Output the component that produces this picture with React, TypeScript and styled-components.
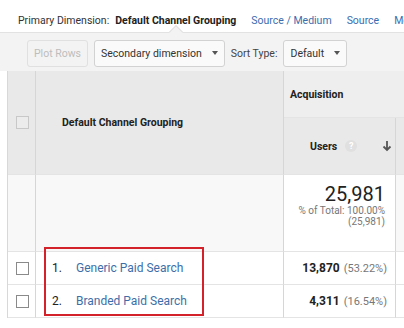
import React from 'react';
import styled, {createGlobalStyle} from 'styled-components';

const GlobalStyle = createGlobalStyle`
    body {
        margin: 0;
        background: #fff;
        font-family: Roboto, 'Liberation Sans', sans-serif;
        color: #222;
    }
`;

const Page = styled.div`
    width: 404px;
    height: 328px;
    overflow: hidden;
    position: relative;
`;

const DimensionBar = styled.div`
    display: flex;
    align-items: flex-end;
    height: 32px;
    padding: 0 0 5px 18px;
    box-sizing: border-box;
    font-size: 10.5px;
    white-space: nowrap;
    gap: 15px;
`;

const Label = styled.span`
    color: #333;
    margin-right: -9px;
`;

const Current = styled.span`
    font-weight: 700;
    color: #222;
`;

const DimLink = styled.a`
    color: #3a6cb0;
    text-decoration: none;
`;

const Toolbar = styled.div`
    position: relative;
    display: flex;
    align-items: center;
    gap: 6px;
    height: 39px;
    padding: 2px 0 0 27px;
    box-sizing: border-box;
    background: #f3f3f3;
    border-top: 1px solid #e2e2e2;

    &::before {
        content: '';
        position: absolute;
        top: -6px;
        left: 171px;
        width: 9px;
        height: 9px;
        background: #f3f3f3;
        border-left: 1px solid #e2e2e2;
        border-top: 1px solid #e2e2e2;
        transform: rotate(45deg);
    }
`;

interface IButtonProps {
    readonly disabled?: boolean;
}

const ToolButton = styled.div<IButtonProps>`
    display: flex;
    align-items: center;
    gap: 10px;
    height: 27px;
    padding: 0 6px;
    box-sizing: border-box;
    border: 1px solid ${p => p.disabled ? '#e0e0e0' : '#d2d2d2'};
    border-radius: 3px;
    background: ${p => p.disabled ? '#f3f3f3' : '#fafafa'};
    color: ${p => p.disabled ? '#bdbdbd' : '#333'};
    font-size: 10.5px;
    white-space: nowrap;
`;

const Caret = styled.span`
    width: 0;
    height: 0;
    border-left: 3.5px solid transparent;
    border-right: 3.5px solid transparent;
    border-top: 4px solid #555;
`;

const ToolLabel = styled.span`
    font-size: 10.5px;
    color: #444;
`;

const Table = styled.div`
    display: grid;
    grid-template-columns: 28px 248px 112px 60px;
    grid-template-rows: 47px 57px 77px 33px 33px;
    margin-left: 7px;
    border-left: 1px solid #d8d8d8;
    font-size: 11px;
`;

interface ICellProps {
    readonly bg?: string;
    readonly align?: string;
    readonly valign?: string;
}

const Cell = styled.div<ICellProps>`
    display: flex;
    flex-direction: column;
    justify-content: ${p => p.valign || 'center'};
    align-items: ${p => p.align || 'flex-start'};
    background: ${p => p.bg || '#fff'};
    border-right: 1px solid #d6d6d6;
    border-bottom: 1px solid #e4e4e4;
    box-sizing: border-box;
    white-space: nowrap;
    overflow: hidden;
`;

const SpanCell = styled(Cell)`
    grid-row: span 2;
`;

const HeaderText = styled.span`
    font-weight: 700;
    font-size: 10.5px;
    color: #222;
`;

interface ICheckProps {
    readonly light?: boolean;
}

const Check = styled.span<ICheckProps>`
    width: 11px;
    height: 11px;
    border: 1px solid ${p => p.light ? '#c8c8c8' : '#8a8a8a'};
    background: ${p => p.light ? '#ececec' : '#fff'};
    margin-left: 8px;
`;

const UsersHead = styled.div`
    display: flex;
    align-items: center;
    width: 100%;
    padding-left: 26px;
    box-sizing: border-box;
`;

const Help = styled.span`
    display: inline-flex;
    align-items: center;
    justify-content: center;
    width: 12px;
    height: 12px;
    border-radius: 50%;
    background: #e0e0e0;
    color: #fff;
    font-size: 9px;
    font-weight: 700;
    margin-left: 8px;
`;

const SortArrow = styled.span`
    margin-left: auto;
    margin-right: 3px;
    color: #555;
    display: flex;
`;

const BigTotal = styled.span`
    font-size: 20px;
    color: #222;
    line-height: 21px;
`;

const TotalNote = styled.span`
    font-size: 10px;
    color: #777;
    line-height: 11px;
    text-align: right;
`;

const RowName = styled.div`
    display: flex;
    align-items: center;
    font-size: 12px;
    padding-left: 16px;
`;

const RowIndex = styled.span`
    width: 24px;
    color: #222;
`;

const RowLink = styled.a`
    color: #3d6ea8;
    text-decoration: none;
`;

const Metric = styled.span`
    font-size: 12px;
    font-weight: 700;
    color: #222;
    padding-right: 8px;
`;

const Share = styled.span`
    font-weight: 400;
    font-size: 11px;
    color: #777;
    margin-left: 4px;
`;

const Highlight = styled.div`
    position: absolute;
    left: 44px;
    top: 247px;
    width: 160px;
    height: 69px;
    border: 2px solid #d3222a;
    box-sizing: border-box;
    pointer-events: none;
`;

const rows = [
    {name: 'Generic Paid Search', users: '13,870', share: '(53.22%)'},
    {name: 'Branded Paid Search', users: '4,311', share: '(16.54%)'},
];

export default function App() {
    return (
        <Page>
            <GlobalStyle />
            <DimensionBar>
                <Label>Primary Dimension:</Label>
                <Current>Default Channel Grouping</Current>
                <DimLink>Source / Medium</DimLink>
                <DimLink>Source</DimLink>
                <DimLink>Medium</DimLink>
            </DimensionBar>

            <Toolbar>
                <ToolButton disabled>Plot Rows</ToolButton>
                <ToolButton>Secondary dimension <Caret /></ToolButton>
                <ToolLabel>Sort Type:</ToolLabel>
                <ToolButton>Default <Caret /></ToolButton>
            </Toolbar>

            <Table>
                <SpanCell bg="#e9e9e9"><Check light /></SpanCell>
                <SpanCell bg="#e9e9e9" style={{paddingLeft: 26}}>
                    <HeaderText>Default Channel Grouping</HeaderText>
                </SpanCell>
                <Cell bg="#eeeeee" style={{gridColumn: 'span 2', paddingLeft: 6}}>
                    <HeaderText>Acquisition</HeaderText>
                </Cell>
                <Cell bg="#e9e9e9">
                    <UsersHead>
                        <HeaderText>Users</HeaderText>
                        <Help>?</Help>
                        <SortArrow>
                            <svg width="10" height="12" viewBox="0 0 10 12">
                                <path d="M5 1v9M1.5 6.5L5 10l3.5-3.5" stroke="#555" strokeWidth="1.8" fill="none" />
                            </svg>
                        </SortArrow>
                    </UsersHead>
                </Cell>
                <Cell bg="#e9e9e9" />

                <Cell bg="#f8f8f8" />
                <Cell bg="#f8f8f8" />
                <Cell align="flex-end" valign="flex-start" style={{paddingTop: 9, paddingRight: 10}}>
                    <BigTotal>25,981</BigTotal>
                    <TotalNote>% of Total: 100.00%</TotalNote>
                    <TotalNote>(25,981)</TotalNote>
                </Cell>
                <Cell bg="#f8f8f8" />

                {rows.map((r, i) => (
                    <React.Fragment key={r.name}>
                        <Cell><Check /></Cell>
                        <Cell>
                            <RowName>
                                <RowIndex>{i + 1}.</RowIndex>
                                <RowLink>{r.name}</RowLink>
                            </RowName>
                        </Cell>
                        <Cell align="flex-end">
                            <Metric>{r.users}<Share>{r.share}</Share></Metric>
                        </Cell>
                        <Cell />
                    </React.Fragment>
                ))}
            </Table>

            <Highlight />
        </Page>
    );
}
